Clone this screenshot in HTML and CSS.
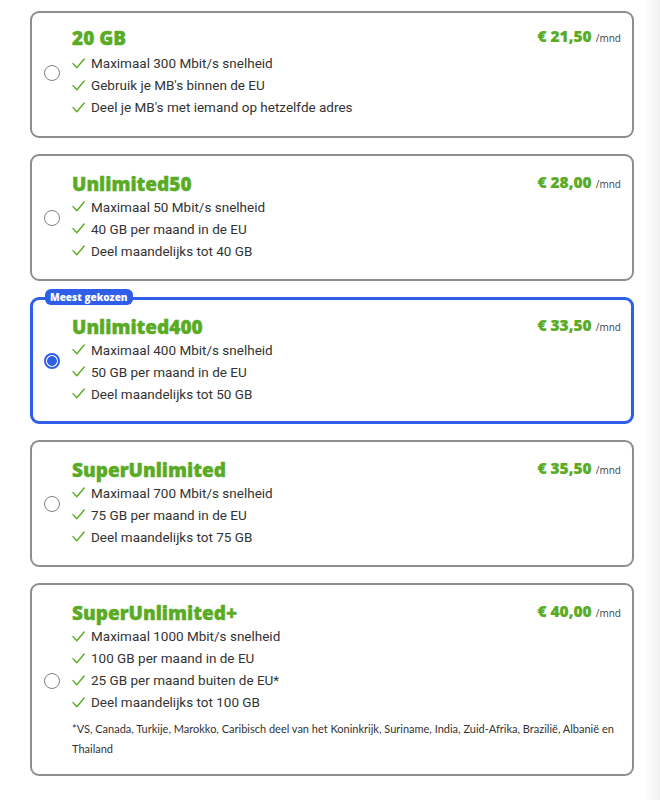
FILE: index.html
```html
<!DOCTYPE html>
<html lang="nl">
<head>
<meta charset="utf-8">
<title>Abonnementen</title>
<link rel="stylesheet" href="styles.css">
</head>
<body>
<svg width="0" height="0" class="defs">
  <symbol id="chk" viewBox="0 0 13 11"><path d="M1 5.6 L4.8 9.8 L12.2 1" fill="none" stroke="#5aab24" stroke-width="1.4" stroke-linecap="round" stroke-linejoin="round"/></symbol>
</svg>
<main class="plans">
  <div class="card card-first">
    <span class="radio"></span>
    <div class="body">
      <div class="head"><h2 class="title">20 GB</h2><div class="price"><strong>€ 21,50</strong> <span>/mnd</span></div></div>
      <ul class="features">
        <li><svg class="ck"><use href="#chk"/></svg>Maximaal 300 Mbit/s snelheid</li>
        <li><svg class="ck"><use href="#chk"/></svg>Gebruik je MB's binnen de EU</li>
        <li><svg class="ck"><use href="#chk"/></svg>Deel je MB's met iemand op hetzelfde adres</li>
      </ul>
    </div>
  </div>
  <div class="card">
    <span class="radio"></span>
    <div class="body">
      <div class="head"><h2 class="title">Unlimited50</h2><div class="price"><strong>€ 28,00</strong> <span>/mnd</span></div></div>
      <ul class="features">
        <li><svg class="ck"><use href="#chk"/></svg>Maximaal 50 Mbit/s snelheid</li>
        <li><svg class="ck"><use href="#chk"/></svg>40 GB per maand in de EU</li>
        <li><svg class="ck"><use href="#chk"/></svg>Deel maandelijks tot 40 GB</li>
      </ul>
    </div>
  </div>
  <div class="card card-selected">
    <span class="badge">Meest gekozen</span>
    <span class="radio radio-on"></span>
    <div class="body">
      <div class="head"><h2 class="title">Unlimited400</h2><div class="price"><strong>€ 33,50</strong> <span>/mnd</span></div></div>
      <ul class="features">
        <li><svg class="ck"><use href="#chk"/></svg>Maximaal 400 Mbit/s snelheid</li>
        <li><svg class="ck"><use href="#chk"/></svg>50 GB per maand in de EU</li>
        <li><svg class="ck"><use href="#chk"/></svg>Deel maandelijks tot 50 GB</li>
      </ul>
    </div>
  </div>
  <div class="card">
    <span class="radio"></span>
    <div class="body">
      <div class="head"><h2 class="title">SuperUnlimited</h2><div class="price"><strong>€ 35,50</strong> <span>/mnd</span></div></div>
      <ul class="features">
        <li><svg class="ck"><use href="#chk"/></svg>Maximaal 700 Mbit/s snelheid</li>
        <li><svg class="ck"><use href="#chk"/></svg>75 GB per maand in de EU</li>
        <li><svg class="ck"><use href="#chk"/></svg>Deel maandelijks tot 75 GB</li>
      </ul>
    </div>
  </div>
  <div class="card card-last">
    <span class="radio"></span>
    <div class="body">
      <div class="head"><h2 class="title">SuperUnlimited+</h2><div class="price"><strong>€ 40,00</strong> <span>/mnd</span></div></div>
      <ul class="features">
        <li><svg class="ck"><use href="#chk"/></svg>Maximaal 1000 Mbit/s snelheid</li>
        <li><svg class="ck"><use href="#chk"/></svg>100 GB per maand in de EU</li>
        <li><svg class="ck"><use href="#chk"/></svg>25 GB per maand buiten de EU*</li>
        <li><svg class="ck"><use href="#chk"/></svg>Deel maandelijks tot 100 GB</li>
      </ul>
      <p class="note">*VS, Canada, Turkije, Marokko, Caribisch deel van het Koninkrijk, Suriname, India, Zuid-Afrika, Brazilië, Albanië en Thailand</p>
    </div>
  </div>
</main>
</body>
</html>
```
FILE: styles.css
```css
html {
  background: linear-gradient(to right, #ffffff 0, #ffffff 644px, #f1f1f1 660px);
  min-height: 100%;
}
body {
  margin: 0;
  font-family: Roboto, Lato, sans-serif;
  color: #333333;
}
.defs { position: absolute; }
.plans {
  display: flex;
  flex-direction: column;
  gap: 16px;
  padding: 11px 0 20px 30px;
  width: 604px;
}
.card {
  position: relative;
  box-sizing: border-box;
  min-height: 127px;
  border: 2px solid #8e8e8e;
  border-radius: 9px;
  display: flex;
  align-items: center;
  padding: 16px 11px 17px 12px;
  background: #fff;
}
.card-first { padding-top: 13px; padding-bottom: 17px; }
.card-first .title { margin-bottom: 4px; }
.card-last { padding-top: 17px; padding-bottom: 15px; }
.card-last .note { margin-top: 6px; }
.card-selected { border: 3px solid #2f5ee8; padding: 15px 10px 16px 11px; }
.radio {
  flex: none;
  width: 16px;
  height: 16px;
  box-sizing: border-box;
  border: 1.5px solid #808080;
  border-radius: 50%;
  margin: 1px 12px 0 0;
  background: #fff;
}
.radio-on {
  border: 2px solid #2f5ee8;
  background: radial-gradient(circle, #2f5ee8 0, #2f5ee8 4.5px, #fff 5.2px);
}
.badge {
  position: absolute;
  left: 12px;
  top: -11px;
  background: #2f5ee8;
  color: #fff;
  font-family: "Open Sans", sans-serif;
  font-size: 10px;
  font-weight: 800;
  line-height: 16px;
  padding: 0 5px;
  border-radius: 6px;
}
.body { flex: 1; min-width: 0; }
.head {
  display: flex;
  justify-content: space-between;
  align-items: flex-start;
}
.title {
  margin: 1px 0 2px;
  font-family: "Open Sans", sans-serif;
  font-size: 19px;
  line-height: 20px;
  font-weight: 800;
  color: #5aab24;
  -webkit-text-stroke: 0.4px #5aab24;
}
.price { line-height: 18px; margin-top: 0; font-family: "Open Sans", sans-serif; }
.price strong {
  font-size: 15.5px;
  font-weight: 800;
  color: #5aab24;
  -webkit-text-stroke: 0.2px #5aab24;
}
.price span { font-size: 10px; color: #444; }
.features {
  list-style: none;
  margin: 0;
  padding: 0;
}
.features li {
  display: flex;
  align-items: center;
  font-size: 13.5px;
  line-height: 22px;
}
.ck {
  width: 13px;
  height: 11px;
  margin: 0 6px 0 0;
  flex: none;
}
.note {
  margin: 5px 0 0;
  font-family: Lato, sans-serif;
  font-size: 11px;
  line-height: 20px;
  color: #333;
}
```
